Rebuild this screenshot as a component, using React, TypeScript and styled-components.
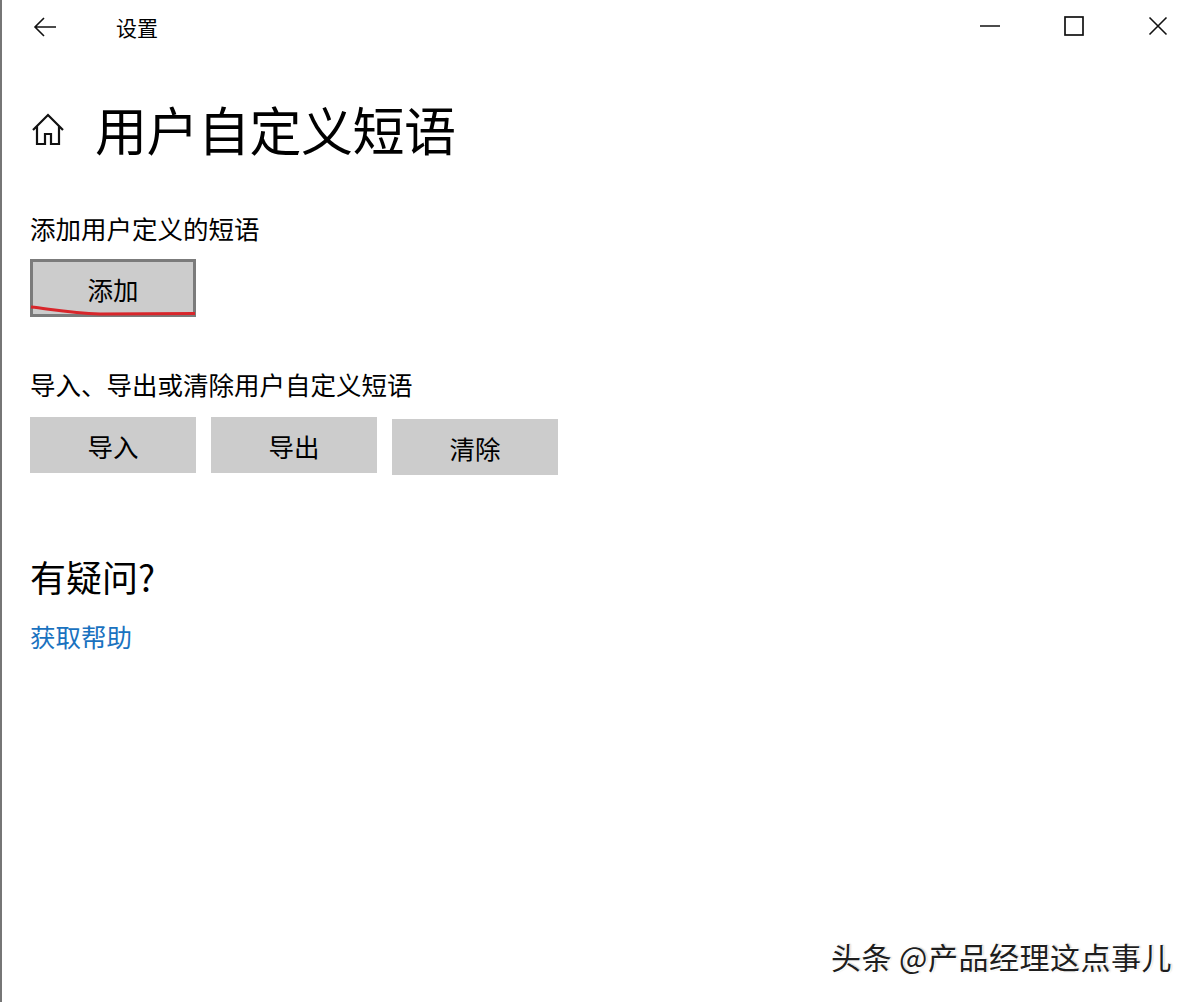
import styled, { createGlobalStyle } from "styled-components";

const GlobalStyle = createGlobalStyle`
    html, body {
        margin: 0;
        padding: 0;
        background: #ffffff;
    }
    body {
        font-family: "Noto Sans CJK SC", "Noto Sans", sans-serif;
        color: #000;
    }
`

const Window = styled.div`
    width: 1200px;
    height: 1002px;
    box-sizing: border-box;
    border-left: 2px solid #767676;
    background: #fff;
    display: flex;
    flex-direction: column;
    position: relative;
    overflow: hidden;
`

const TitleBar = styled.div`
    height: 54px;
    display: flex;
    align-items: center;
`

const BackButton = styled.div`
    width: 88px;
    height: 54px;
    display: flex;
    align-items: center;
    padding-left: 31px;
    box-sizing: border-box;
`

const AppTitle = styled.span`
    font-size: 21px;
    margin-left: 26px;
    margin-top: -1px;
    flex: 1;
`

const Controls = styled.div`
    display: flex;
    align-items: center;
    margin-top: -2px;
`

const ControlButton = styled.div`
    width: 84px;
    height: 54px;
    display: flex;
    align-items: center;
    justify-content: center;
`

const Content = styled.div`
    padding-left: 28px;
    display: flex;
    flex-direction: column;
`

const PageHeader = styled.div`
    display: flex;
    align-items: center;
    margin-top: 41px;
    height: 68px;
`

const PageTitle = styled.h1`
    margin: 0 0 0 29px;
    font-size: 52px;
    font-weight: 400;
    line-height: 68px;
    letter-spacing: -0.5px;
`

const SectionLabel = styled.div<{ $top: number }>`
    font-size: 25.5px;
    line-height: 34px;
    margin-top: ${props => props.$top}px;
`

const ButtonRow = styled.div<{ $top: number }>`
    display: flex;
    gap: 15px;
    margin-top: ${props => props.$top}px;
`

const GrayButton = styled.div<{ $focused?: boolean; $shift?: number }>`
    position: relative;
    width: 166px;
    height: ${props => props.$focused ? 58 : 56}px;
    box-sizing: border-box;
    background: #cccccc;
    border: ${props => props.$focused ? "3px solid #7b7b7b" : "none"};
    display: flex;
    align-items: center;
    justify-content: center;
    font-size: 25.5px;
    margin-top: ${props => props.$shift || 0}px;
`

const RedMark = styled.svg`
    position: absolute;
    left: -3px;
    bottom: -3px;
`

const Question = styled.h2`
    margin: 79px 0 0;
    font-size: 36px;
    font-weight: 400;
    line-height: 44px;
`

const HelpLink = styled.a`
    margin-top: 21px;
    font-size: 25.5px;
    line-height: 34px;
    color: #1a72bf;
    text-decoration: none;
`

const Watermark = styled.div`
    position: absolute;
    right: 28px;
    bottom: 24px;
    font-size: 30px;
    color: #1e1e1e;
    letter-spacing: 0.5px;
    text-shadow: 1px 1px 0 #fff, -1px -1px 0 #fff, 1px 0 2px rgba(0,0,0,0.35);
`

const App = () => {
    return (
        <Window>
            <GlobalStyle />
            <TitleBar>
                <BackButton>
                    <svg width="24" height="20" viewBox="0 0 24 20" fill="none" stroke="#111" strokeWidth="1.6">
                        <path d="M23 10H2M11 1L2 10l9 9" />
                    </svg>
                </BackButton>
                <AppTitle>设置</AppTitle>
                <Controls>
                    <ControlButton>
                        <svg width="22" height="4" viewBox="0 0 22 4"><path d="M1 2h20" stroke="#111" strokeWidth="1.5" /></svg>
                    </ControlButton>
                    <ControlButton>
                        <svg width="20" height="20" viewBox="0 0 20 20"><rect x="1" y="1" width="18" height="18" fill="none" stroke="#111" strokeWidth="1.7" /></svg>
                    </ControlButton>
                    <ControlButton>
                        <svg width="20" height="20" viewBox="0 0 20 20"><path d="M1.5 1.5l17 17M18.5 1.5l-17 17" stroke="#111" strokeWidth="1.6" /></svg>
                    </ControlButton>
                </Controls>
            </TitleBar>
            <Content>
                <PageHeader>
                    <svg width="36" height="36" viewBox="0 0 36 36" fill="none" stroke="#111" strokeWidth="2.2" strokeLinejoin="miter">
                        <path d="M3 19L18 4l15 15M7 15v18h8V23h6v10h8V15" />
                    </svg>
                    <PageTitle>用户自定义短语</PageTitle>
                </PageHeader>
                <SectionLabel $top={48}>添加用户定义的短语</SectionLabel>
                <ButtonRow $top={14}>
                    <GrayButton $focused>
                        添加
                        <RedMark width="166" height="14" viewBox="0 0 166 14">
                            <path d="M1 4 C 20 6, 40 10, 70 11 L 165 10.5" fill="none" stroke="#d8262b" strokeWidth="3" />
                        </RedMark>
                    </GrayButton>
                </ButtonRow>
                <SectionLabel $top={50}>导入、导出或清除用户自定义短语</SectionLabel>
                <ButtonRow $top={16}>
                    <GrayButton>导入</GrayButton>
                    <GrayButton>导出</GrayButton>
                    <GrayButton $shift={2}>清除</GrayButton>
                </ButtonRow>
                <Question>有疑问?</Question>
                <HelpLink>获取帮助</HelpLink>
            </Content>
            <Watermark>头条 @产品经理这点事儿</Watermark>
        </Window>
    );
}

export default App;
